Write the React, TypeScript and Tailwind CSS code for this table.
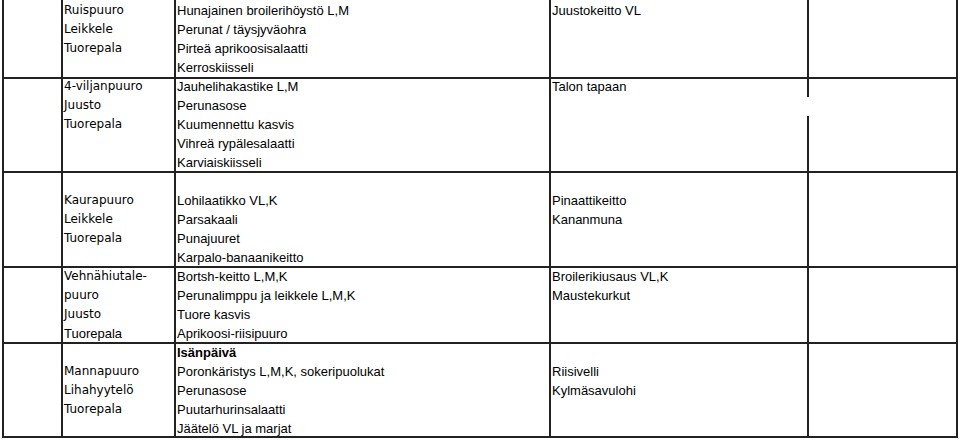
type Line = { t: string; arial?: boolean; bold?: boolean };

type Row = {
  h: string;
  offset: string;
  c2: Line[];
  c3: Line[];
  c4: Line[];
  gap?: boolean;
};

const l = (t: string, extra: Partial<Line> = {}): Line => ({ t, ...extra });

const rows: Row[] = [
  {
    h: "h-[79px]",
    offset: "mt-px",
    c2: [l("Ruispuuro"), l("Leikkele"), l("Tuorepala")],
    c3: [
      l("Hunajainen broilerihöystö L,M"),
      l("Perunat / täysjyväohra"),
      l("Pirteä aprikoosisalaatti"),
      l("Kerroskiisseli"),
    ],
    c4: [l("Juustokeitto VL")],
  },
  {
    h: "h-[94px]",
    offset: "-mt-[2px]",
    gap: true,
    c2: [l("4-viljanpuuro"), l("Juusto"), l("Tuorepala")],
    c3: [
      l("Jauhelihakastike L,M"),
      l("Perunasose"),
      l("Kuumennettu kasvis"),
      l("Vihreä rypälesalaatti"),
      l("Karviaiskiisseli"),
    ],
    c4: [l("Talon tapaan")],
  },
  {
    h: "h-[95px]",
    offset: "-mt-px",
    c2: [l(""), l("Kaurapuuro"), l("Leikkele"), l("Tuorepala")],
    c3: [
      l(""),
      l("Lohilaatikko VL,K"),
      l("Parsakaali"),
      l("Punajuuret"),
      l("Karpalo-banaanikeitto"),
    ],
    c4: [l(""), l("Pinaattikeitto"), l("Kananmuna")],
  },
  {
    h: "h-[76px]",
    offset: "-mt-px",
    c2: [
      l("Vehnähiutale-"),
      l("puuro"),
      l("Juusto"),
      l("Tuorepala", { arial: true }),
    ],
    c3: [
      l("Bortsh-keitto L,M,K"),
      l("Perunalimppu ja leikkele L,M,K"),
      l("Tuore kasvis"),
      l("Aprikoosi-riisipuuro"),
    ],
    c4: [l("Broilerikiusaus VL,K"), l("Maustekurkut")],
  },
  {
    h: "h-[94px]",
    offset: "-mt-px",
    c2: [l(""), l("Mannapuuro"), l("Lihahyytelö"), l("Tuorepala")],
    c3: [
      l("Isänpäivä", { bold: true }),
      l("Poronkäristys L,M,K, sokeripuolukat"),
      l("Perunasose"),
      l("Puutarhurinsalaatti"),
      l("Jäätelö VL ja marjat"),
    ],
    c4: [l(""), l("Riisivelli"), l("Kylmäsavulohi")],
  },
];

const comic = "font-['DejaVu_Sans',sans-serif] text-[12px]";
const arial = "font-['Liberation_Sans',Arial,sans-serif] text-[13px]";

function Lines({
  items,
  offset,
  defaultArial,
}: {
  items: Line[];
  offset: string;
  defaultArial: boolean;
}) {
  return (
    <div className={`${offset} pl-px`}>
      {items.map((item, i) => (
        <div
          key={i}
          className={`h-[19px] leading-[19px] whitespace-nowrap text-black ${
            item.arial || defaultArial ? arial : comic
          } ${item.bold ? "font-bold" : ""}`}
        >
          {item.t}
        </div>
      ))}
    </div>
  );
}

export default function App() {
  return (
    <div className="w-[960px] h-[440px] bg-white overflow-hidden">
      <div className="ml-[2px] w-[956px] border-l-2 border-[#222]">
        {rows.map((row, i) => (
          <div key={i} className={`flex ${row.h} border-b-2 border-[#222]`}>
            <div className="w-[59px] shrink-0 border-r-2 border-[#222]" />
            <div className="w-[113px] shrink-0 border-r-2 border-[#222] overflow-hidden">
              <Lines items={row.c2} offset={row.offset} defaultArial={false} />
            </div>
            <div className="w-[375px] shrink-0 border-r-2 border-[#222] overflow-hidden">
              <Lines items={row.c3} offset={row.offset} defaultArial={true} />
            </div>
            {row.gap ? (
              <div className="w-[258px] shrink-0 flex">
                <div className="flex-1 overflow-hidden">
                  <Lines items={row.c4} offset={row.offset} defaultArial={true} />
                </div>
                {/* the printed rule breaks off here in the source */}
                <div className="w-[2px] flex flex-col">
                  <div className="h-[18px] bg-[#222]" />
                  <div className="h-[19px]" />
                  <div className="flex-1 bg-[#222]" />
                </div>
              </div>
            ) : (
              <div className="w-[258px] shrink-0 border-r-2 border-[#222] overflow-hidden">
                <Lines items={row.c4} offset={row.offset} defaultArial={true} />
              </div>
            )}
            <div className="w-[149px] shrink-0 border-r-2 border-[#222]" />
          </div>
        ))}
      </div>
    </div>
  );
}
